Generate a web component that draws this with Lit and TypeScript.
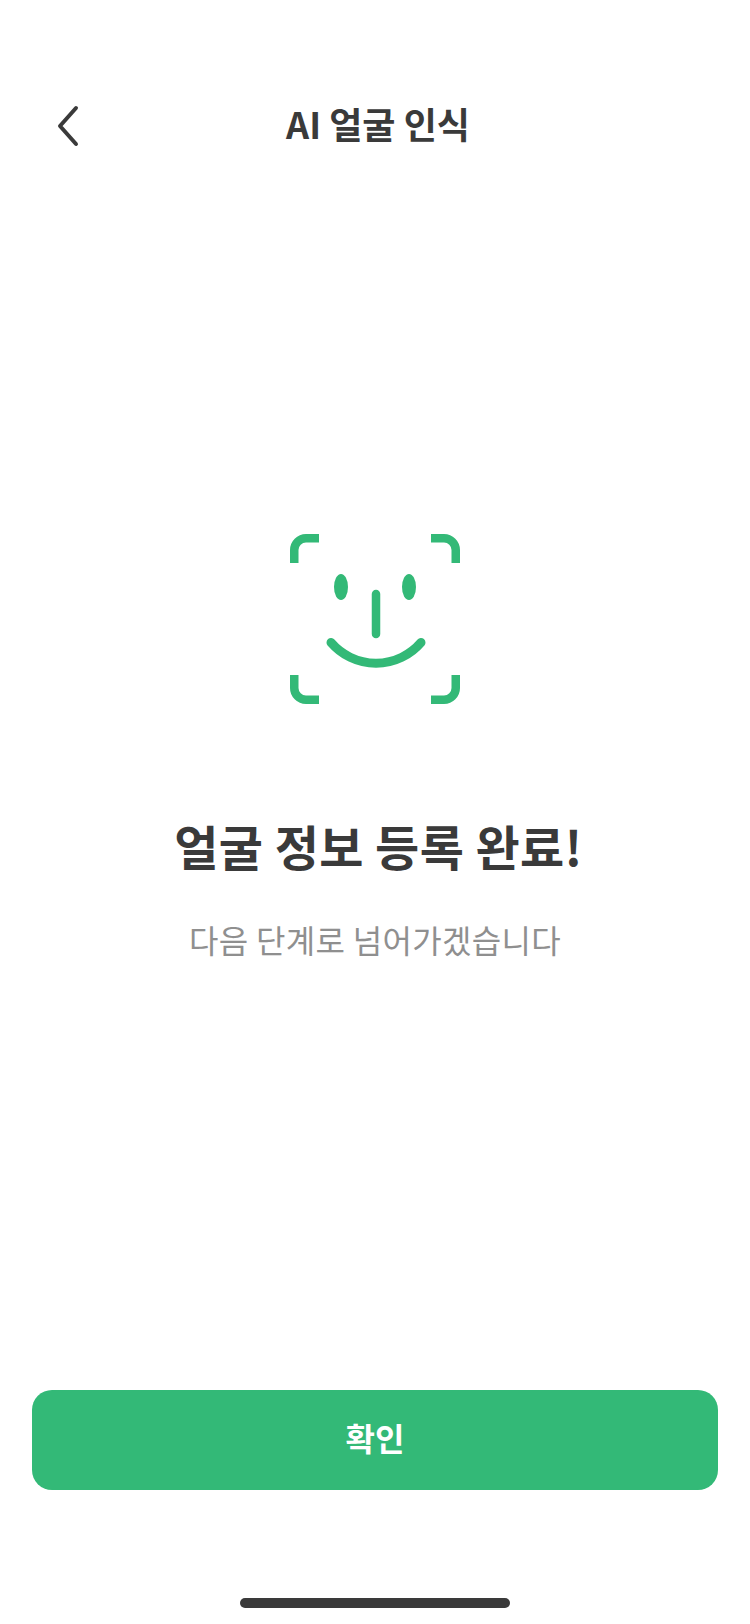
import { LitElement, html, css } from "lit";
import { customElement } from "lit/decorators.js";

@customElement("app-root")
export class AppRoot extends LitElement {
  static styles = css`
    :host {
      display: block;
      width: 750px;
      height: 1624px;
      background: #fff;
      font-family: "Noto Sans CJK KR", "Noto Sans", sans-serif;
      color: #3a3a3a;
    }
    .page {
      display: flex;
      flex-direction: column;
      height: 1624px;
      box-sizing: border-box;
    }
    .header {
      display: flex;
      align-items: center;
      height: 60px;
      margin-top: 96px;
      padding-left: 52px;
    }
    .back {
      display: block;
      width: 30px;
      height: 48px;
    }
    .header-title {
      flex: 1;
      padding-right: 76px;
      padding-bottom: 6px;
      text-align: center;
      font-size: 36px;
      line-height: 54px;
      font-weight: 700;
    }
    .main {
      display: flex;
      flex-direction: column;
      align-items: center;
      padding-top: 378px;
      flex: 1;
    }
    .face {
      display: block;
      width: 170px;
      height: 170px;
    }
    h1 {
      margin: 109px 0 0 7px;
      font-size: 48px;
      letter-spacing: 0.4px;
      line-height: 64px;
      font-weight: 700;
    }
    p {
      margin: 38px 0 0;
      font-size: 32px;
      letter-spacing: 0.3px;
      line-height: 48px;
      font-weight: 400;
      color: #8f8f8f;
    }
    .btn {
      display: block;
      margin: 0 32px;
      height: 100px;
      border: 0;
      border-radius: 20px;
      background: #33b977;
      color: #fff;
      font: 700 32px/94px "Noto Sans CJK KR", "Noto Sans", sans-serif;
      text-align: center;
      padding: 0 0 6px;
    }
    .home {
      width: 270px;
      height: 10px;
      border-radius: 5px;
      background: #3a3a3a;
      margin: 108px auto 16px;
    }
  `;

  render() {
    return html`
      <div class="page">
        <div class="header">
          <svg class="back" viewBox="0 0 30 48" fill="none" stroke="#3a3a3a" stroke-width="4" stroke-linecap="round" stroke-linejoin="round">
            <path d="M24 6 L8 24 L24 42" />
          </svg>
          <div class="header-title">AI 얼굴 인식</div>
        </div>
        <div class="main">
          <svg class="face" viewBox="0 0 170 170" fill="none" stroke="#33b977" stroke-width="8.500">
            <path d="M4.250 29 V16 A11.750 11.750 0 0 1 16 4.250 H29" />
            <path d="M141 4.250 H154 A11.750 11.750 0 0 1 165.750 16 V29" />
            <path d="M4.250 141 V154 A11.750 11.750 0 0 0 16 165.750 H29" />
            <path d="M141 165.750 H154 A11.750 11.750 0 0 0 165.750 154 V141" />
            <ellipse cx="51" cy="53" rx="7" ry="13" fill="#33b977" stroke="none" />
            <ellipse cx="119" cy="53" rx="7" ry="13" fill="#33b977" stroke="none" />
            <path d="M86 60 V100" stroke-linecap="round" />
            <path d="M41 108.500 A59.300 59.300 0 0 0 131 108.500" stroke-linecap="round" stroke-width="9" />
          </svg>
          <h1>얼굴 정보 등록 완료!</h1>
          <p>다음 단계로 넘어가겠습니다</p>
        </div>
        <button class="btn">확인</button>
        <div class="home"></div>
      </div>
    `;
  }
}
